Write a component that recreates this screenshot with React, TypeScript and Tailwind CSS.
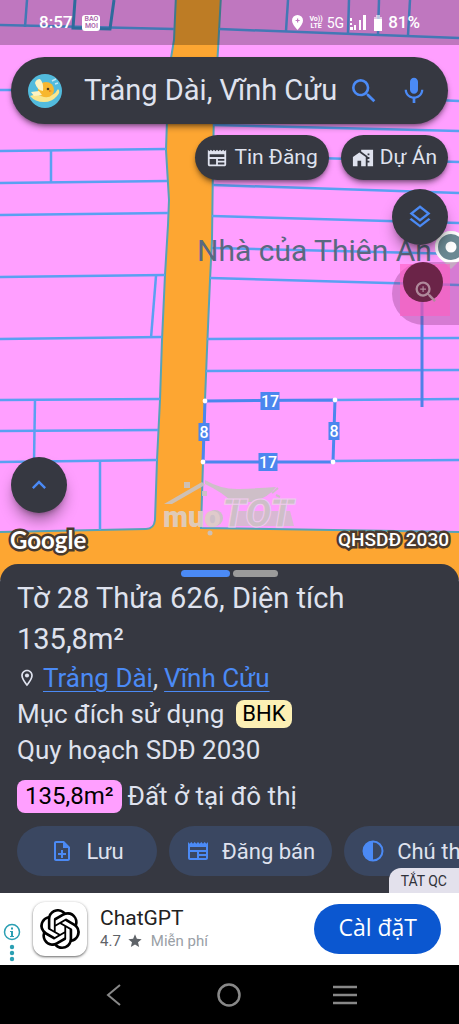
import React, { useState } from 'react';
import {
  MdHomeWork,
  MdKeyboardArrowUp,
  MdMic,
  MdNewspaper,
  MdOutlineLayers,
  MdOutlineLocationOn,
  MdOutlineNoteAdd,
  MdSearch,
  MdStar,
  MdZoomIn,
} from 'react-icons/md';
import { SiOpenai } from 'react-icons/si';

const PARCEL_LINES = [
  // west side of the road
  'M0 25L174 29',
  'M27 0L25 27',
  'M0 90L170 90',
  'M0 151L166 149',
  'M51 151V183',
  'M0 183L167 181',
  'M0 215L168 213',
  'M0 277L165 275',
  'M156 276L151 338',
  'M0 339L162 337',
  'M0 400L160 399',
  'M35 400L34 462',
  'M0 431L158 430',
  'M0 462L157 460',
  'M100 461V530',
  // east side of the road
  'M219 29L459 38',
  'M288 0L286 31',
  'M349 0L348 33',
  'M379 0L378 34',
  'M410 0L408 35',
  'M214 90L459 101',
  'M213 125L459 131',
  'M213 155L459 162',
  'M213 185L459 193',
  'M212 216L459 223',
  'M212 248L459 254',
  'M210 278L459 285',
  'M207 339L459 338',
  'M206 371L459 370',
  'M335 400L459 399',
  'M333 461L459 460',
];

const SIDE_LABELS = [
  { x: 270, y: 401, w: 19, text: '17' },
  { x: 268, y: 462, w: 19, text: '17' },
  { x: 204, y: 432, w: 11, text: '8' },
  { x: 334, y: 431, w: 11, text: '8' },
];

const CORNERS = [
  [205, 401],
  [335, 400],
  [333, 462],
  [203, 462],
];

const ParcelMap: React.FC = () => (
  <svg
    className="absolute inset-0 h-full w-full"
    viewBox="0 0 459 580"
    preserveAspectRatio="xMidYMin slice"
    fontFamily="Roboto, sans-serif"
  >
    <rect width="459" height="580" fill="#ff9fff" />
    <path
      d="M176 -5L174 40L169 70L167 120L166 150L169 200L168 225L165 275L162 340L160 400L157 460L155 520Q154 529 146 529L-5 532V590H464V532L201 528L203 462L205 400L207 350L210 280L212 240L213 160L214 110L218 50L221 -5Z"
      fill="#fda632"
      stroke="#55a3b8"
      strokeWidth="2"
    />
    <g stroke="#5aa0f2" strokeWidth="2.5" fill="none">
      {PARCEL_LINES.map((d) => (
        <path key={d} d={d} />
      ))}
    </g>
    <path d="M75 0L73 28L110 29L114 0" fill="none" stroke="#3e8fd0" strokeWidth="3" />

    <text x="197" y="261" fontSize="30" fill="#5a6880">
      Nhà của Thiên Ân
    </text>

    <path d="M422 300V407" stroke="#5080e8" strokeWidth="3" />
    <path d="M205 401L335 400L333 462L203 462Z" fill="none" stroke="#4b86ee" strokeWidth="3" />
    {SIDE_LABELS.map((label) => (
      <g key={`${label.x}-${label.y}`}>
        <rect x={label.x - label.w / 2} y={label.y - 9} width={label.w} height="18" fill="#4b86ee" />
        <text x={label.x} y={label.y + 6} fontSize="16" fontWeight="500" fill="#fff" textAnchor="middle">
          {label.text}
        </text>
      </g>
    ))}
    {CORNERS.map(([cx, cy]) => (
      <circle key={`${cx}-${cy}`} cx={cx} cy={cy} r="2.4" fill="#fff" />
    ))}

    {/* agency watermark */}
    <g fill="#c9c3c3" opacity="0.9">
      <path d="M164 504L202 482L205 485L172 504Z" />
      <path d="M184 482h6v6h-6zM202 491h5v5h-5z" />
      <path d="M205 480Q222 490 240 489Q260 488 276 487Q268 498 252 502H232Q222 492 205 484Z" />
      <path d="M272 493l6-5M276 495l4 2" stroke="#c9c3c3" strokeWidth="2" />
      <circle cx="215" cy="518" r="8" />
      <path d="M228 526L234 511H290L294 526Z" opacity="0.8" />
      <text x="163" y="527" fontSize="29" fontWeight="900" fill="#dccfc6" fontFamily="Roboto, sans-serif">
        muo
      </text>
      <text
        x="222"
        y="527"
        fontSize="39"
        fontWeight="900"
        fontStyle="italic"
        stroke="#f0d0ee"
        strokeWidth="1"
        fontFamily="Roboto, sans-serif"
      >
        TOT
      </text>
      <circle cx="210" cy="533" r="2.5" />
    </g>

    {/* place marker */}
    <path d="M435 247a16 16 0 0 1 32 0q0 9-9 15l-7 7l-7-7q-9-6-9-15Z" fill="#e6e6e6" />
    <circle cx="451" cy="247" r="14.5" fill="#6b8993" stroke="#fff" strokeWidth="3" />
    <circle cx="451" cy="247" r="5.5" fill="#fff" />
  </svg>
);

const StatusBar: React.FC = () => (
  <div className="flex h-[45px] items-center bg-black/25 px-[39px] text-white">
    <span className="text-[17px] font-medium">8:57</span>
    <span className="ml-2.5 rounded-[3px] bg-white px-[2px] py-px text-center text-[7px] font-bold leading-[7px] text-[#b06fb0]">
      BAO
      <br />
      MOI
    </span>
    <svg className="ml-auto h-[15px] w-[11px]" viewBox="0 0 11 15" fill="#fff" fillRule="evenodd">
      <path d="M5.500 0A5.500 5.500 0 0 0 0 5.500Q0 9 5.500 15Q11 9 11 5.500A5.500 5.500 0 0 0 5.500 0ZM5 3.500h1.200v1.400h1.400v1.200H6.200v1.400H5V6.100H3.600V4.900H5z" />
    </svg>
    <span className="ml-1.5 text-center text-[7px] font-bold leading-[7px]">
      Vo))
      <br />
      LTE
    </span>
    <span className="ml-1 text-sm">5G</span>
    <svg className="ml-1.5 h-4 w-4" viewBox="0 0 16 16" fill="#fff">
      <path d="M0 3h2v3H0zM0 8h2v2H0zM0 12h3v3H0zM4 10h2v5H4zM9 5h2v10H9zM13 0h3v15h-3z" />
    </svg>
    <svg className="ml-2 h-4 w-2" viewBox="0 0 8 16" fill="#fff">
      <path d="M2 0h4v2h2v14H0V2h2z" opacity=".6" />
      <path d="M0 4h8v12H0z" />
    </svg>
    <span className="ml-1.5 text-[17px] font-medium">81%</span>
  </div>
);

const SearchBar: React.FC = () => {
  const [query, setQuery] = useState('Trảng Dài, Vĩnh Cửu');

  return (
    <form
      onSubmit={(e) => e.preventDefault()}
      className="mx-[11px] mt-3 flex h-[67px] items-center rounded-full bg-[#363841] pl-[17px] pr-[18px] shadow-md shadow-black/40"
    >
      <svg className="h-[34px] w-[34px] shrink-0" viewBox="0 0 34 34">
        <circle cx="17" cy="17" r="17" fill="#52bbdd" />
        <path d="M24 7l4-2M27 10l3-1" stroke="#bfe6f3" strokeWidth="1.5" />
        <circle cx="18" cy="16" r="8" fill="#f7b72f" />
        <path d="M2 22Q9 19 13 22Q20 25 24 21Q28 19 30 15Q33 18 29 22Q24 28 16 28Q7 28 2 22Z" fill="#fae58c" />
        <path d="M7 9Q8 5 12 5Q16 9 15 17Q9 16 7 9Z" fill="#fdf3c2" />
        <path d="M3 18l8-1l3 4l-8 1z" fill="#fdf3c2" />
        <circle cx="20" cy="15" r="1.3" fill="#4a3a20" />
        <path d="M21 16l3 1l-3 1z" fill="#e87722" />
      </svg>
      <input
        aria-label="Tìm kiếm"
        value={query}
        onChange={(e) => setQuery(e.target.value)}
        className="ml-[22px] min-w-0 flex-1 bg-transparent text-[29px] text-[#dfe2ee] outline-none"
      />
      <button type="submit" aria-label="Tìm" className="text-[#4b8af5]">
        <MdSearch className="h-8 w-8" />
      </button>
      <button type="button" aria-label="Giọng nói" className="ml-[18px] text-[#4b8af5]">
        <MdMic className="h-8 w-8" />
      </button>
    </form>
  );
};

const chip =
  'flex h-[45px] items-center gap-1.5 rounded-full bg-[#363841] px-[11px] text-[21px] text-[#dfe2ee] shadow-md shadow-black/40';
const roundButton =
  'flex h-14 w-14 items-center justify-center rounded-full bg-[#363841] text-[#4b8af5] shadow-lg shadow-black/40';
const outlined =
  '[paint-order:stroke] [-webkit-text-stroke:5px_#4a3a2e] text-white';
const action =
  'flex h-[50px] min-w-[140px] shrink-0 items-center justify-center gap-3 rounded-full bg-[#3a4761] px-[17px] text-[22px] text-[#dfe2ee]';
const row = 'flex h-9 items-center text-[26px]';
const link = 'text-[#4b8af5] underline decoration-1 underline-offset-4';

const ContrastIcon: React.FC = () => (
  <svg className="h-6 w-6 text-[#4b8af5]" viewBox="0 0 24 24" fill="none">
    <circle cx="12" cy="12" r="9.5" stroke="currentColor" strokeWidth="2" />
    <path d="M12 2a10 10 0 0 0 0 20z" fill="currentColor" />
  </svg>
);

const ParcelSheet: React.FC = () => (
  <section className="relative -mt-4 overflow-hidden rounded-t-[18px] bg-[#363841] px-[17px] pb-[17px] pt-1.5 text-[#dfe2ee]">
    <div className="flex justify-center gap-[3px]">
      <span className="h-[7px] w-[49px] rounded-full bg-[#4b8af5]" />
      <span className="h-[7px] w-[45px] rounded-full bg-[#9b9b9b]" />
    </div>
    <h1 className="mr-16 mt-px text-[29px] leading-[41px]">Tờ 28 Thửa 626, Diện tích 135,8m²</h1>
    <p className={row}>
      <MdOutlineLocationOn className="mr-1.5 h-5 w-5" />
      <a href="#trang-dai" className={link}>
        Trảng Dài
      </a>
      <span className="mr-1.5">,</span>
      <a href="#vinh-cuu" className={link}>
        Vĩnh Cửu
      </a>
    </p>
    <p className={`${row} gap-3`}>
      Mục đích sử dụng
      <span className="rounded-lg bg-[#fdf0b4] px-1.5 text-[22px] leading-7 text-black">BHK</span>
    </p>
    <p className={row}>Quy hoạch SDĐ 2030</p>
    <p className={`${row} mt-2.5 gap-1.5`}>
      <span className="rounded-lg bg-[#ff9fff] px-2 text-2xl leading-[33px] text-black">135,8m²</span>
      Đất ở tại đô thị
    </p>
    <div className="-mr-[17px] mt-3 flex gap-3 overflow-hidden">
      <button type="button" className={action}>
        <MdOutlineNoteAdd className="h-6 w-6 text-[#4b8af5]" />
        Lưu
      </button>
      <button type="button" className={action}>
        <MdNewspaper className="h-6 w-6 text-[#4b8af5]" />
        Đăng bán
      </button>
      <button type="button" className={action}>
        <ContrastIcon />
        Chú thích
      </button>
    </div>
    <button
      type="button"
      className="absolute bottom-0 right-0 h-[25px] rounded-tl-xl bg-[#e3e1ec] px-3 text-sm text-[#30323a]"
    >
      TẮT QC
    </button>
  </section>
);

const AdBanner: React.FC = () => (
  <aside className="flex h-[72px] items-center bg-white pr-[18px]">
    <svg className="mt-7 h-[42px] w-6" viewBox="0 0 24 42" fill="#2a9fb3">
      <circle cx="12" cy="10" r="7.500" fill="none" stroke="#2a9fb3" strokeWidth="1.500" />
      <path d="M11 5.500h2v2h-2zM10 9h3v5h1v1h-4v-1h1v-4h-1z" />
      <circle cx="12" cy="25" r="2.200" />
      <circle cx="12" cy="31" r="2.200" />
      <circle cx="12" cy="37" r="2.200" />
    </svg>
    <div className="ml-[9px] flex h-[54px] w-[54px] items-center justify-center rounded-xl bg-white shadow-sm shadow-black/50">
      <SiOpenai className="h-10 w-10 text-black" />
    </div>
    <div className="ml-[13px]">
      <h2 className="text-[21px] leading-6 text-[#222]">ChatGPT</h2>
      <p className="flex items-center text-[15px] leading-[22px] text-[#5f6368]">
        4.7
        <MdStar className="ml-1.5 mr-2 h-4 w-4" />
        <span className="text-[#9aa0a6]">Miễn phí</span>
      </p>
    </div>
    <button
      type="button"
      className="ml-auto h-[50px] rounded-full bg-[#0b57d0] px-6 pb-1 font-['Open_Sans',sans-serif] text-[23px] text-white"
    >
      Càl đặT
    </button>
  </aside>
);

const SystemNav: React.FC = () => (
  <nav className="flex h-[59px] items-center justify-around bg-black px-14 text-[#888]">
    <button type="button" aria-label="Quay lại">
      <svg className="h-6 w-6" viewBox="0 0 24 24" fill="none" stroke="currentColor" strokeWidth="2">
        <path d="M18 2L6 12L18 22" />
      </svg>
    </button>
    <button type="button" aria-label="Màn hình chính">
      <svg className="h-6 w-6" viewBox="0 0 24 24" fill="none" stroke="currentColor" strokeWidth="2.500">
        <circle cx="12" cy="12" r="10.500" />
      </svg>
    </button>
    <button type="button" aria-label="Ứng dụng gần đây">
      <svg className="h-6 w-6" viewBox="0 0 24 24" fill="none" stroke="currentColor" strokeWidth="2.500">
        <path d="M0 4H24M0 12H24M0 20H24" />
      </svg>
    </button>
  </nav>
);

const App: React.FC = () => {
  return (
    <div className="flex min-h-screen flex-col overflow-hidden font-[Roboto,'Noto_Sans',sans-serif]">
      <main className="relative flex min-h-[560px] flex-1 flex-col overflow-hidden">
        <ParcelMap />
        <div className="relative flex flex-1 flex-col">
          <StatusBar />
          <SearchBar />
          <div className="mr-[11px] mt-[11px] flex justify-end gap-3">
            <button type="button" className={chip}>
              <MdNewspaper className="h-[22px] w-[22px]" />
              Tin Đăng
            </button>
            <button type="button" className={chip}>
              <MdHomeWork className="h-[22px] w-[22px]" />
              Dự Án
            </button>
          </div>
          <div className="mt-[9px] flex flex-col items-end">
            <button type="button" aria-label="Lớp bản đồ" className={`${roundButton} mr-[11px]`}>
              <MdOutlineLayers className="h-7 w-7" />
            </button>
            <button
              type="button"
              aria-label="Phóng to"
              className="relative mt-[17px] h-[63px] w-[67px] rounded-l-full bg-[#8a3a80]/35"
            >
              <span className="absolute left-2 top-0.5 h-[52px] w-[50px] bg-[#ff5cc0]/60" />
              <span className="absolute left-[11px] top-0 h-10 w-10 rounded-full bg-[#6b2448]" />
              <MdZoomIn className="absolute left-5 top-4 h-7 w-7 text-[#b08a9c]" />
            </button>
          </div>
          <div className="mt-auto pb-[23px]">
            <button type="button" aria-label="Mở rộng" className={`${roundButton} ml-[11px]`}>
              <MdKeyboardArrowUp className="h-7 w-7" />
            </button>
            <div className="mt-2.5 flex items-center justify-between px-[10px]">
              <span className={`${outlined} font-[Lato,sans-serif] text-2xl font-bold leading-[34px]`}>Google</span>
              <span className={`${outlined} text-[19px] font-medium leading-[34px]`}>QHSDĐ 2030</span>
            </div>
          </div>
        </div>
      </main>
      <ParcelSheet />
      <AdBanner />
      <SystemNav />
    </div>
  );
};

export default App;
